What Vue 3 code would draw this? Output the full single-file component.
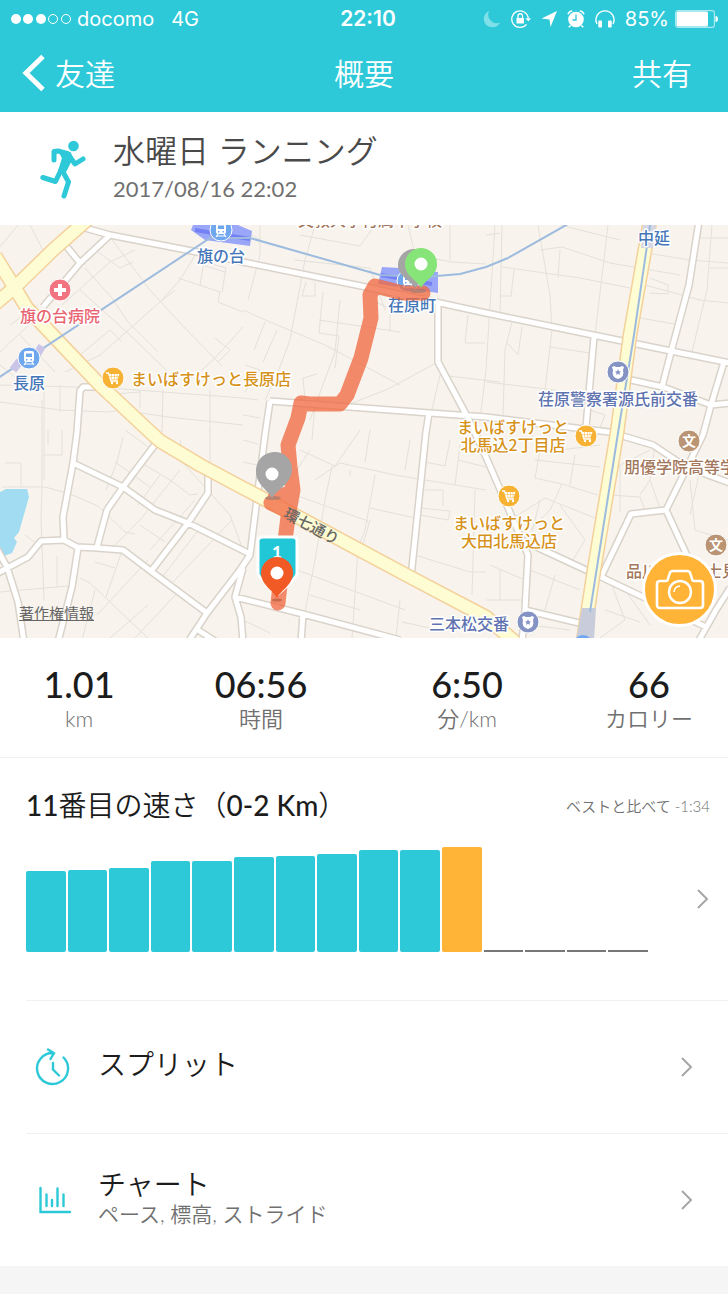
<script setup>
const stats = [
  { value: '1.01', label: 'km' },
  { value: '06:56', label: '時間' },
  { value: '6:50', label: '分/km' },
  { value: '66', label: 'カロリー' },
]

const bars = [81, 82, 84, 91, 91, 95, 96, 98, 102, 102, 105, 2, 2, 2, 2].map((height, i) => ({
  height,
  kind: i < 10 ? 'past' : i === 10 ? 'current' : 'empty',
}))

const lanes = [
  'M0 247L18 225M30 225L44 252M62 305L110 262L135 250M85 268L112 298L128 322L158 352M98 252L120 268L133 262M80 290L130 335L168 372',
  'M110 237L150 290L182 325L222 366M197 252L180 280L160 302L100 355L65 372M178 278L220 292L218 302L243 312M200 285L204 262L226 268L222 292M205 266L225 272',
  'M243 327L215 358L202 370M215 338L230 350L218 362M160 302L175 290M0 352L32 322M0 365L25 385M0 385L110 388L243 398M0 402L60 410L108 412L120 410L168 417L243 425',
  'M44 385V480M60 385V412M100 395L140 392M140 390V408M163 390L162 432M210 390V432M38 305L10 325M20 335L55 372M80 355L110 330L122 342M48 445V430M5 463H21V487M2 487L45 487L70 494L98 506L125 532L135 534',
  'M42 400V487L41 520L44 600M62 430V455H43M25 535L40 546M0 592L68 586M57 556V587M80 578L90 583L150 640M123 437L117 462L106 490M115 462L150 487M135 478L110 500M145 465L170 480L190 495L198 494M160 475L138 505',
  'M125 430L155 452M180 440L185 465L230 515L243 550M210 430V477M180 470L140 520L110 550M195 500L150 550M200 528L160 580M232 520L173 582M140 525L165 542M95 562L115 568M121 554L106 597M82 640L95 590M97 615L148 560M110 638L148 605M135 638L180 590',
  'M260 225V255L248 300M243 230L260 240M315 225L305 260L290 340L278 372L265 400M295 260L370 268L385 310M300 235L360 246L375 225M243 310L270 322L325 345L400 385M265 322L254 350M277 330L263 362M306 282L302 296H315V282M323 292L319 333L339 336L335 368M319 320L400 332',
  'M340 300L335 352L310 420M375 302L390 308V330M408 225L415 255L452 262L486 264M450 225V260M468 315L465 343H485M495 225L486 370L480 420M350 404L388 389L438 362M430 418L440 375L500 382M243 398L258 400M245 365L260 370L245 392M305 400L303 378L317 374M315 405L312 440M243 415L260 418',
  'M502 225L500 315M486 235L500 233M502 267L580 278L630 288M514 270L511 296H500M538 225L550 295L552 330L545 390M540 250L562 247L610 263L680 275M560 250L558 278M560 225L620 240M608 225L595 335M640 252L690 260L728 263M650 278L668 285V294L650 293M645 285L700 300L728 303M712 225L707 290L690 360',
  'M640 318L680 325M512 322L505 350L503 416M522 327L518 355L507 343M550 347L590 353M486 382L580 393M700 238H728M710 268H728M590 410L605 415L600 428',
  'M300 450L335 466L360 430M332 466L325 500L315 560L300 638M315 480L340 463L395 475L486 490M350 470V476M370 430L365 462M410 440L405 470M310 450L290 480M295 495L368 521M300 500L283 530M370 508L415 518M375 475L365 530L358 548M297 570L405 610M310 595L360 610M358 550L352 638M300 610L280 605M362 548L370 520M415 555L470 572H486M418 500L423 490H443V506M420 508L450 511L448 520L420 515M425 462L445 466L450 440M455 485L460 445M458 460L486 467M475 490L472 595M310 620L340 625M243 440L258 444M243 462L262 466M243 620L270 633M400 600L396 638M402 622L430 628',
  'M530 432L540 450L535 478L562 484L598 495M535 460L600 467M560 450L600 445M562 484L550 510L530 530M575 455L570 485M510 520L545 498L600 520M540 500L530 540M560 505L585 540L570 565M486 545L520 550M490 565L525 580M500 570V600M486 600H522M530 570L580 590M555 575L545 610M600 490L620 465L650 450M610 495L640 497L645 510M620 465V512M655 445L650 480L660 508M640 495L650 480M690 480L695 530L728 540M700 470L690 515M610 580L625 620L600 638M625 590L650 625M530 625L570 630M605 610L640 622',
].join('')

const roads = [
  'M85 228L110 235L197 252L243 262L366 287L440 303L486 313L593 335L671 351L730 363',
  'M110 235L80 263L43 307M67 247L80 263',
  'M102 387H83L80 391L77 432L73 463L63 517L64 540',
  'M-4 574L28 557L41 541L64 540L77 547L97 548L123 550L152 572L207 613',
  'M-3 549L7 567L18 602L24 642M78 548L72 587L58 642',
  'M73 463L123 487L155 510L188 523L250 554',
  'M157 442L123 487L107 510L97 547M208 474V493L188 523L152 570',
  'M270 401L265 435L250 555L240 570L207 613L188 642M198 630L215 641',
  'M243 568L235 597L241 617L243 642M235 597L303 614L400 640M303 614L301 642',
  'M270 401L430 413L486 417L609 432L653 445L686 467L730 483',
  'M438 303V362L468 418L486 457L509 510L528 555L525 610L522 642M525 610L579 623',
  'M429 413L426 432L411 577M594 337L586 427',
  'M699 221L689 285L671 352L662 387M631 380L663 387L711 405L730 403',
  'M724 362L711 405L703 435L666 510L631 514L601 577M666 510L690 562',
  'M515 537L586 570L601 577L643 597L706 627M730 588L716 610L698 642',
].join('')

const highway = 'M88 219L53 250L14 288L-5 304M-5 256L13 285L27 308L60 343L100 385L148 430L160 441L200 465L243 488L300 518L410 577L486 617L515 642M650 221L630 335L617 433L594 570L583 642'

const route = 'M423 293H403L375 286L370 295L371 318L361 358L347 395L340 404L310 404L301 403L298 418L288 445L290 467L293 490L288 517L286 533L278 603M271 503L290 512M275 498L286 494'

const labels = [
  { lines: ['文教大学付属中学校'], x: 370, y: 226, tone: 'school' },
  { lines: ['旗の台'], x: 221, y: 262, tone: 'station' },
  { lines: ['荏原町'], x: 412, y: 311, tone: 'station' },
  { lines: ['中延'], x: 654, y: 244, tone: 'station' },
  { lines: ['長原'], x: 29, y: 389, tone: 'station' },
  { lines: ['旗の台病院'], x: 60, y: 322, tone: 'hospital' },
  { lines: ['まいばすけっと長原店'], x: 211, y: 385, tone: 'shop' },
  { lines: ['まいばすけっと', '北馬込2丁目店'], x: 513, y: 433, tone: 'shop' },
  { lines: ['まいばすけっと', '大田北馬込店'], x: 509, y: 529, tone: 'shop' },
  { lines: ['荏原警察署源氏前交番'], x: 618, y: 405, tone: 'police' },
  { lines: ['三本松交番'], x: 469, y: 630, tone: 'police' },
  { lines: ['朋優学院高等学校'], x: 688, y: 473, tone: 'school' },
  { lines: ['品川区立富士見台'], x: 690, y: 577, tone: 'school' },
]

const trains = [[221, 230], [29, 358], [408, 281]]
const carts = [[113, 378], [586, 436], [509, 496]]
const police = [[618, 372], [528, 622]]
const schools = [[689, 441], [716, 545]]
const at = ([x, y]) => `translate(${x} ${y})`
</script>

<template>
  <main class="app">
    <header class="top">
      <div class="status">
        <div class="carrier">
          <svg class="signal" width="62" height="12" viewBox="0 0 62 12" aria-hidden="true">
            <g fill="#fff"><circle cx="6" cy="6" r="5" /><circle cx="18" cy="6" r="5" /><circle cx="31" cy="6" r="5" /></g>
            <g fill="none" stroke="#fff" stroke-width="1"><circle cx="43" cy="6" r="4.5" /><circle cx="56" cy="6" r="4.5" /></g>
          </svg>
          <span>docomo</span>
          <span class="network">4G</span>
        </div>
        <time class="clock">22:10</time>
        <div class="indicators">
          <svg width="18" height="20" viewBox="0 0 18 20" aria-hidden="true"><path d="M6 2A8.5 8.5 0 1 0 17 13.500A8.600 8.600 0 0 1 6 2Z" fill="#7fe0ea" /></svg>
          <svg width="20" height="20" viewBox="0 0 20 20" fill="none" stroke="#fff" stroke-width="1.300" aria-hidden="true">
            <path d="M15.500 15.400A8.300 8.300 0 1 1 17.300 9" />
            <path d="M14.600 9.200H20L17.300 12.600Z" fill="#fff" stroke="none" />
            <rect x="5.500" y="9" width="7.500" height="5.500" rx=".6" fill="#fff" stroke="none" />
            <path d="M7 9V7a2.250 2.250 0 0 1 4.500 0V9" />
          </svg>
          <svg width="16" height="18" viewBox="0 0 16 18" aria-hidden="true"><path d="M16 1L9.500 17L8.500 9.500L.5 8.500Z" fill="#fff" /></svg>
          <svg width="18" height="20" viewBox="0 0 18 20" aria-hidden="true">
            <circle cx="9" cy="10.500" r="7.800" fill="#fff" />
            <path d="M1 5.200A5 5 0 0 1 5.200 2M17 5.200A5 5 0 0 0 12.800 2M3.500 16.500L1.800 18.300M14.500 16.500L16.200 18.300" fill="none" stroke="#fff" stroke-width="1.600" />
            <path d="M9 5.500V11H5.500" fill="none" stroke="#2dc9d9" stroke-width="1.300" />
          </svg>
          <svg width="20" height="20" viewBox="0 0 20 20" aria-hidden="true">
            <path d="M2 17A9 9 0 1 1 18 17" fill="none" stroke="#fff" stroke-width="1.400" transform="translate(0 -2)" />
            <rect x="3.300" y="11.500" width="3.700" height="7" rx="1" fill="#fff" /><rect x="13" y="11.500" width="3.700" height="7" rx="1" fill="#fff" />
          </svg>
          <span class="charge">85%</span>
          <svg width="43" height="18" viewBox="0 0 43 18" aria-hidden="true">
            <rect x=".6" y=".6" width="38.800" height="16.800" rx="2.500" fill="none" stroke="#a9e9f0" stroke-width="1.200" />
            <rect x="1.500" y="1.500" width="31.500" height="15" rx="1.500" fill="#fff" />
            <path d="M40.500 6Q43 6 43 9T40.500 12Z" fill="#fff" />
          </svg>
        </div>
      </div>
      <nav class="nav">
        <button class="nav-button back" type="button">
          <svg width="24" height="38" viewBox="0 0 24 38" aria-hidden="true"><path d="M21 2.500L4 19L21 35.500" fill="none" stroke="#fff" stroke-width="5" /></svg>
          <span>友達</span>
        </button>
        <h1 class="nav-title">概要</h1>
        <button class="nav-button share" type="button">共有</button>
      </nav>
    </header>

    <section class="activity">
      <svg class="runner" width="48" height="60" viewBox="0 0 48 60" aria-hidden="true">
        <g fill="none" stroke="#2dc9d9" stroke-linecap="round" stroke-linejoin="round">
          <path d="M14 21V12.500L18 12L27 14.500" stroke-width="5" />
          <path d="M19 11.500L30 14L32 19L25 33L19 32L23 19Z" stroke-width="2" fill="#2dc9d9" />
          <path d="M30 18L35 25L43 20" stroke-width="5" />
          <path d="M21 31L15.500 42.500L2.800 38.500" stroke-width="5" />
          <path d="M22.500 32L28.500 43L24 57" stroke-width="5" />
        </g>
        <circle cx="33.500" cy="7" r="5.300" fill="#2dc9d9" />
      </svg>
      <div class="activity-text">
        <h2>水曜日 ランニング</h2>
        <time>2017/08/16 22:02</time>
      </div>
    </section>

    <section class="map" aria-label="ルート">
      <svg class="map-art" viewBox="0 225 728 413">
        <rect y="225" width="728" height="413" fill="#f8f4ed" />
        <path :d="lanes" class="lane" />
        <path d="M0 492L6 489H27L29 497L19 532L14 538L17 542L12 553L4 556L0 552Z" fill="#a2dcf3" />
        <path :d="roads" class="road-edge" />
        <path :d="roads" class="road" />
        <path :d="highway" class="highway-edge" />
        <path :d="highway" class="highway" />
        <path d="M582 608H596L594 640H576Z" fill="#c9cddb" />
        <g fill="#9aa7f8">
          <path d="M193 225H238L252 231L250 246L205 240L191 230Z" />
          <path d="M382 267L400 268L438 272V293L378 284Z" />
          <path d="M643 225H656L653 248H641Z" fill="#d5d7e4" />
        </g>
        <path d="M195 230L250 239M381 275L432 284" stroke="#7480f4" stroke-width="4" />
        <path d="M-2 378L210 238L250 238L380 275L425 277L460 274L486 267L508 258L568 224M650 225L634 335L618 433L590 612" class="rail" />
        <path d="M36 356L42 346M13 370L20 361" stroke="#cac5e8" stroke-width="8" />

        <g v-for="p in trains" :key="p.join()" :transform="at(p)">
          <circle r="11" fill="#6fa7ef" stroke="#fff" />
          <rect x="-5" y="-7" width="10" height="11" rx="2" fill="#fff" />
          <path d="M-3 -4.500H3V-1H-3ZM-3 1H-1.500V2.500H-3ZM1.500 1H3V2.500H1.500Z" fill="#6fa7ef" />
          <path d="M-3 4L-5 7M3 4L5 7M-4 6H4" stroke="#fff" stroke-width="1.200" />
        </g>
        <g :transform="at([60, 290])">
          <circle r="11" fill="#f27480" stroke="#fff" />
          <path d="M0 -6V6M-6 0H6" stroke="#fff" stroke-width="4" />
        </g>
        <g v-for="p in carts" :key="p.join()" :transform="at(p)">
          <circle r="11" fill="#f7b234" stroke="#fff" />
          <path d="M-7 -5H-4.500L-2 3H5" fill="none" stroke="#fff" stroke-width="1.300" />
          <path d="M-4.500 -4H6.500L4.500 1.500H-2.500Z" fill="#fff" />
          <path d="M-1.500 -4V1M1.500 -4V1M4 -4V1M-4 -1.500H6" stroke="#f7b234" stroke-width=".5" />
          <circle cx="-1" cy="5" r="1.200" fill="#fff" /><circle cx="4" cy="5" r="1.200" fill="#fff" />
        </g>
        <g v-for="p in police" :key="p.join()" :transform="at(p)">
          <circle r="11" fill="#8493c4" stroke="#fff" />
          <path d="M-6 -5L-4 -6L-2 -5H2L4 -6L6 -5L5 -2Q7 5 0 7Q-7 5 -5 -2Z" fill="#fff" />
          <path d="M0 -3L.9 -.8L3 -.6L1.400 .9L2 3L0 1.800L-2 3L-1.400 .9L-3 -.6L-.9 -.8Z" fill="#8493c4" />
        </g>
        <g v-for="p in schools" :key="p.join()" :transform="at(p)">
          <circle r="11" fill="#bb9473" stroke="#fff" />
          <text y="5" class="school-mark">文</text>
        </g>
        <circle cx="583" cy="645" r="10" fill="#6fa7ef" />

        <text v-for="l in labels" :key="l.x + l.tone + l.y" :x="l.x" :y="l.y" :class="['place', l.tone]"><tspan v-for="(line, i) in l.lines" :key="line" :x="l.x" :dy="i * 18">{{ line }}</tspan></text>

        <path :d="route" class="route" />
        <text class="place street" transform="translate(309 531) rotate(28)">環七通り</text>

        <g fill="#777" opacity=".45"><ellipse cx="418" cy="291" rx="8" ry="2" /><ellipse cx="273" cy="498" rx="8" ry="2" /></g>
        <path d="M415 288C411 280 398 277 398 265A16 16 0 0 1 430 265C430 277 419 280 415 288Z" fill="#a5a5a5" />
        <path d="M421 288C417 280 405 276 405 264A16 16 0 0 1 437 264C437 276 425 280 421 288Z" fill="#87e478" />
        <circle cx="421" cy="264" r="6.500" fill="#fff" />
        <path d="M272 498C267 489 256 484 256 472C256 458 266 452 275 452A17 17 0 0 1 292 469C292 483 279 488 272 498Z" fill="#a5a5a5" />
        <circle cx="272" cy="474" r="6.500" fill="#fff" />

        <path d="M263 537H293Q297 537 297 541V573Q297 578 278 594Q258 578 258 573V541Q258 537 263 537Z" fill="#21c7d7" stroke="#fff" stroke-width="3" />
        <text x="277" y="558" class="kilometre">1</text>
        <ellipse cx="277" cy="600" rx="5" ry="1.500" fill="#a44a32" opacity=".5" />
        <path d="M277 598C273 590 261 585 261 573A16 16 0 0 1 293 573C293 585 281 590 277 598Z" fill="#f15a24" />
        <circle cx="277" cy="573" r="6.500" fill="#fff" />
      </svg>
      <a class="legal" href="#legal">著作権情報</a>
      <button class="camera" type="button" aria-label="写真を追加">
        <svg width="50" height="42" viewBox="0 0 50 42" fill="none" stroke="#fff" stroke-width="2.600" stroke-linejoin="round" aria-hidden="true">
          <path d="M5 12H11Q12.500 12 13 10L14.500 5Q15 2 18 2H32Q35 2 35.500 5L37 10Q37.500 12 39 12H45Q48 12 48 15V36Q48 39 45 39H5Q2 39 2 36V15Q2 12 5 12Z" />
          <circle cx="25" cy="23" r="11" stroke-width="2.400" /><path d="M19 23A6 6 0 0 1 25 17" stroke-width="1.600" />
        </svg>
      </button>
    </section>

    <dl class="stats">
      <div v-for="s in stats" :key="s.label" class="stat">
        <dt>{{ s.label }}</dt>
        <dd>{{ s.value }}</dd>
      </div>
    </dl>

    <section class="pace">
      <div class="pace-head">
        <h2><b>11</b>番目の速さ（<b>0-2 Km</b>）</h2>
        <p>ベストと比べて -1:34</p>
      </div>
      <a class="pace-body" href="#pace" aria-label="速さの詳細">
        <div class="bars">
          <span v-for="(b, i) in bars" :key="i" :class="['bar', b.kind]" :style="{ height: b.height + 'px' }"></span>
        </div>
        <svg class="chevron" width="14" height="22" viewBox="0 0 14 22" aria-hidden="true"><path d="M2 2L11 11L2 20" /></svg>
      </a>
    </section>

    <a class="row" href="#splits">
      <svg class="row-icon" width="36" height="40" viewBox="0 0 36 40" aria-hidden="true">
        <path d="M28.500 10.500A15.500 15.500 0 1 1 18.500 6M13 2.500L19 6.200L15.500 12M18 16V22.500L24 28.500" />
      </svg>
      <span class="row-text"><span class="row-title">スプリット</span></span>
      <svg class="chevron" width="14" height="22" viewBox="0 0 14 22" aria-hidden="true"><path d="M2 2L11 11L2 20" /></svg>
    </a>
    <a class="row" href="#charts">
      <svg class="row-icon" width="36" height="40" viewBox="0 0 36 40" aria-hidden="true">
        <path d="M5.500 8V32H35M11.500 14.500V26M17 20V26M22.500 8.500V26M28.500 14.500V26" />
      </svg>
      <span class="row-text">
        <span class="row-title">チャート</span>
        <span class="row-sub">ペース, 標高, ストライド</span>
      </span>
      <svg class="chevron" width="14" height="22" viewBox="0 0 14 22" aria-hidden="true"><path d="M2 2L11 11L2 20" /></svg>
    </a>
  </main>
</template>

<style>
body {
  background: #f5f5f5;
}
</style>

<style scoped>
.app {
  font-family: Lato, "Noto Sans CJK JP", sans-serif;
  font-weight: 350;
  color: #1c1c1c;
  padding-bottom: 27px;
}
h1, h2, p, dl, dd {
  margin: 0;
  font-weight: inherit;
}
button {
  border: 0;
  padding: 0;
  background: none;
  color: inherit;
  font: inherit;
  cursor: pointer;
}
a {
  color: inherit;
  text-decoration: none;
}
svg {
  display: block;
  flex-shrink: 0;
}
.top {
  background: #2dc9d9;
  color: #fff;
}
.status {
  display: grid;
  grid-template-columns: 1fr auto 1fr;
  align-items: center;
  height: 37px;
  padding: 0 10px;
  font-family: Inter, sans-serif;
  font-size: 20px;
  font-weight: 400;
}
.carrier, .indicators {
  display: flex;
  align-items: center;
}
.carrier {
  gap: 5px;
}
.network {
  margin-left: 12px;
}
.clock {
  padding-left: 8px;
  font-size: 21px;
  font-weight: 600;
}
.indicators {
  justify-content: flex-end;
  gap: 10px;
}
.charge {
  margin-right: -4px;
}
.nav {
  display: grid;
  grid-template-columns: 1fr auto 1fr;
  align-items: center;
  height: 75px;
  box-sizing: border-box;
  padding: 0 36px 3px 22px;
  font-size: 30px;
  line-height: 44px;
}
.nav-button.back {
  display: flex;
  align-items: center;
  gap: 9px;
}
.nav-title {
  font-size: 30px;
  padding-left: 14px;
}
.share {
  justify-self: end;
}
.activity {
  display: flex;
  align-items: center;
  gap: 25px;
  height: 113px;
  padding: 0 40px;
  box-sizing: border-box;
  background: #fff;
}
.activity-text {
  padding-bottom: 3px;
}
.activity-text h2 {
  color: #4a4a4a;
  font-size: 32px;
  line-height: 44px;
}
.activity-text time {
  display: block;
  color: #707070;
  font-size: 22px;
  font-weight: 400;
  line-height: 32px;
}
.map {
  position: relative;
}
.map-art {
  width: 100%;
  height: auto;
}
.lane, .road, .road-edge, .highway, .highway-edge, .rail, .route {
  fill: none;
  stroke-linejoin: round;
}
.lane { stroke: #e4e1da; stroke-width: 1; }
.road-edge { stroke: #d9d3ca; stroke-width: 8; }
.road { stroke: #fff; stroke-width: 5; }
.highway-edge { stroke: #f4d09b; stroke-width: 15; }
.highway { stroke: #fdfcd3; stroke-width: 12; }
.rail { stroke: #9dbbdf; stroke-width: 2; }
.route {
  stroke: #f0653c;
  stroke-width: 15;
  stroke-linecap: round;
  opacity: .75;
}
.place {
  font-family: "Noto Sans CJK JP", sans-serif;
  font-size: 16px;
  font-weight: 500;
  text-anchor: middle;
  paint-order: stroke;
  stroke: #fff;
  stroke-width: 3px;
  stroke-linejoin: round;
}
.station { fill: #4577b8; }
.hospital { fill: #e96470; }
.shop { fill: #d6921a; }
.police { fill: #5f73b0; }
.school { fill: #a3775b; }
.street {
  fill: #666;
  font-size: 15px;
  stroke: none;
}
.school-mark {
  fill: #fff;
  font-family: "Noto Sans CJK JP", sans-serif;
  font-size: 14px;
  font-weight: 700;
  text-anchor: middle;
}
.kilometre {
  fill: #fff;
  font-size: 17px;
  font-weight: 900;
  text-anchor: middle;
}
.legal {
  position: absolute;
  left: 19px;
  bottom: 14px;
  color: #666;
  font-size: 15px;
  font-weight: 400;
  line-height: 22px;
  text-decoration: underline;
}
.camera {
  position: absolute;
  right: 11px;
  bottom: 11px;
  display: flex;
  align-items: center;
  justify-content: center;
  width: 75px;
  height: 75px;
  border: 3px solid #fff;
  border-radius: 50%;
  background: #ffb437;
}
.stats {
  display: grid;
  grid-template-columns: 158fr 206fr 206fr 158fr;
  height: 120px;
  padding-top: 24px;
  box-sizing: border-box;
  border-bottom: 1px solid #f2f2f2;
  background: #fff;
  text-align: center;
}
.stat {
  display: flex;
  flex-direction: column-reverse;
  justify-content: flex-end;
}
.stat dd {
  font-size: 36px;
  font-weight: 500;
  line-height: 44px;
}
.stat dt {
  color: #707070;
  font-size: 22px;
  line-height: 26px;
}
.pace {
  height: 242px;
  box-sizing: border-box;
  padding: 27px 18px 0 26px;
  background: #fff;
}
.pace-head {
  display: flex;
  justify-content: space-between;
  align-items: center;
}
.pace-head h2 {
  font-size: 28px;
  line-height: 40px;
}
.pace-head b {
  font-weight: 500;
}
.pace-head p {
  color: #707070;
  font-size: 15px;
}
.pace-body {
  display: flex;
  align-items: center;
  justify-content: space-between;
  gap: 48px;
  margin-top: 21px;
}
.bars {
  flex: 1;
  display: grid;
  grid-template-columns: repeat(15, 1fr);
  align-items: end;
  gap: 2px;
  height: 106px;
}
.bar {
  border-radius: 2px;
  background: #2dc9d9;
}
.bar.current {
  background: #ffb437;
}
.bar.empty {
  border-radius: 0;
  background: #777;
}
.chevron {
  fill: none;
  stroke: #a6a6a6;
  stroke-width: 2;
}
.row {
  display: flex;
  align-items: center;
  gap: 27px;
  height: 133px;
  padding: 0 34px 0 35px;
  background: linear-gradient(#f0f0f0, #f0f0f0) 26px 0 / 100% 1px no-repeat #fff;
}
.row-icon {
  fill: none;
  stroke: #2dc9d9;
  stroke-width: 2.4px;
  stroke-linecap: round;
}
.row-text {
  flex: 1;
  display: flex;
  flex-direction: column;
  padding-bottom: 5px;
}
.row-title {
  font-size: 28px;
  line-height: 34px;
}
.row-sub {
  color: #707070;
  font-size: 21px;
  line-height: 26px;
}
</style>
